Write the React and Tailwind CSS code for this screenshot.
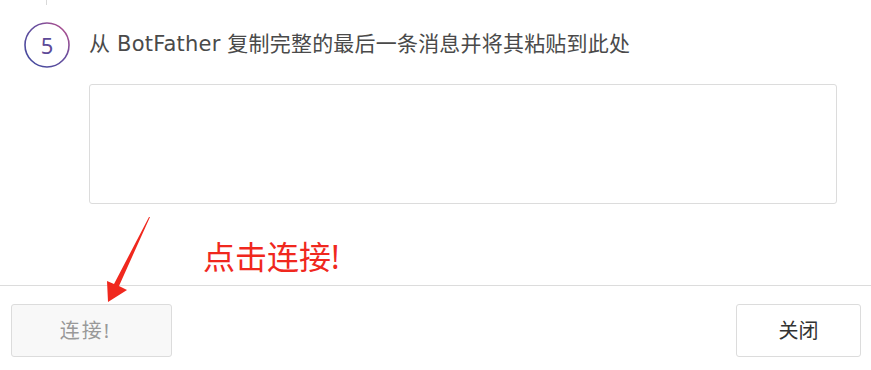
import React from 'react';

const font = { fontFamily: '"Noto Sans", "Noto Sans CJK SC", sans-serif' };
const wide = { fontFamily: '"DejaVu Sans", "Noto Sans CJK SC", sans-serif' };

const StepCircle = () => (
    <div className="relative w-[46px] h-[46px] shrink-0">
        <svg className="absolute inset-0" width="46" height="46" viewBox="0 0 46 46">
            <defs>
                <linearGradient id="ring" x1="0" y1="1" x2="1" y2="0">
                    <stop offset="0" stopColor="#3f4a9e" />
                    <stop offset="0.6" stopColor="#6a4f9e" />
                    <stop offset="1" stopColor="#c4508a" />
                </linearGradient>
            </defs>
            <circle cx="23" cy="23" r="22" fill="none" stroke="url(#ring)" strokeWidth="1.6" />
        </svg>
        <span className="absolute inset-0 flex items-center justify-center text-[22px] text-[#5d4a98] leading-none" style={font}>
            5
        </span>
    </div>
);

export default function App() {
    return (
        <div className="relative w-[871px] h-[370px] bg-white overflow-hidden" style={font}>

            {/* Step 5 */}
            <div className="ml-[46px] w-px h-[5px] bg-[#d9d9d9]"></div>
            <div className="flex items-center gap-[19px] pl-[24px] mt-[17px]">
                <StepCircle />
                <p className="text-[21px] text-[#4a4a4a] leading-none pb-[1px] tracking-[0.2px]" style={wide}>
                    从 BotFather 复制完整的最后一条消息并将其粘贴到此处
                </p>
            </div>

            <div className="ml-[89px] mt-[16px] w-[748px] h-[120px] border border-[#dcdcdc] rounded-[3px]"></div>

            {/* Annotation */}
            <div className="h-[81px] pl-[203px] pt-[37px]">
                <span className="text-[32px] leading-none text-[#f0281e]">点击连接!</span>
            </div>

            {/* Footer */}
            <div className="border-t border-[#dcdcdc] flex justify-between pt-[18px] pl-[11px] pr-[10px]">
                <button className="w-[161px] h-[53px] pr-[12px] bg-[#f8f8f8] border border-[#dcdcdc] rounded-[3px] text-[20px] tracking-[2px] text-[#999]">
                    连接!
                </button>
                <button className="w-[125px] h-[53px] bg-white border border-[#dcdcdc] rounded-[3px] text-[20px] text-[#333]">
                    关闭
                </button>
            </div>

            {/* Red arrow */}
            <svg className="absolute left-0 top-0 pointer-events-none" width="871" height="370" viewBox="0 0 871 370">
                <polygon
                    points="150,217 119,286 127,290 108,302 107,281 114,284 149,217"
                    fill="#f0281e"
                />
            </svg>
        </div>
    );
}
